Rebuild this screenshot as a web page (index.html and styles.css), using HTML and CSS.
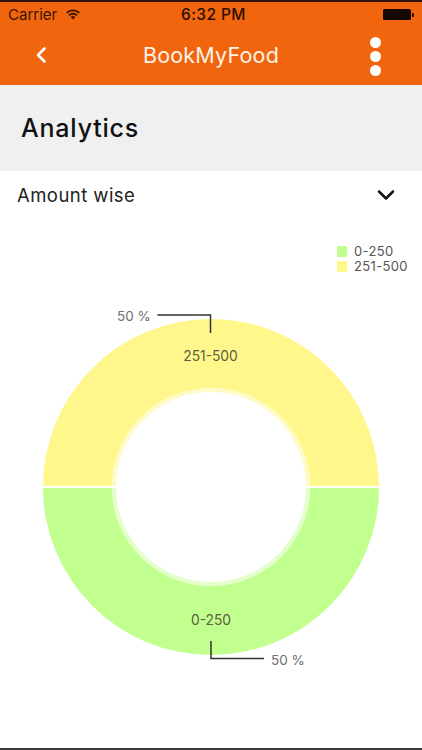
FILE: index.html
```html
<!DOCTYPE html>
<html lang="en">
<head>
<meta charset="utf-8">
<title>BookMyFood</title>
<link rel="stylesheet" href="styles.css">
</head>
<body>
<div class="screen">
  <header class="appbar">
    <div class="status">
      <div class="status-left">
        <span>Carrier</span>
        <svg class="wifi" viewBox="0 0 16 12" width="16" height="12"><path d="M8 11.6 5.7 9.1a3.3 3.3 0 0 1 4.6 0ZM4.6 8 3.4 6.7a6.6 6.6 0 0 1 9.2 0L11.4 8a4.9 4.9 0 0 0-6.8 0ZM2.3 5.6 1 4.3a9.9 9.9 0 0 1 14 0l-1.3 1.3a8.1 8.1 0 0 0-11.4 0Z" fill="#3a1600"/></svg>
      </div>
      <span class="clock">6:32 PM</span>
      <div class="battery"><span class="battery-body"></span><span class="battery-tip"></span></div>
    </div>
    <nav class="navbar">
      <svg class="back" viewBox="0 0 12 18" width="12" height="18"><path d="M9.5 2.5 3 9l6.5 6.5" fill="none" stroke="#fff" stroke-width="2.6" stroke-linecap="round" stroke-linejoin="round"/></svg>
      <h1 class="title">BookMyFood</h1>
      <div class="dots"><span></span><span></span><span></span></div>
    </nav>
  </header>
  <section class="heading"><h2>Analytics</h2></section>
  <div class="select">
    <span>Amount wise</span>
    <svg viewBox="0 0 18 12" width="18" height="12"><path d="M2 2.5 9 9.5l7-7" fill="none" stroke="#111" stroke-width="2.5" stroke-linecap="round" stroke-linejoin="round"/></svg>
  </div>
  <div class="legend">
    <div class="legend-item"><i class="swatch green"></i>0-250</div>
    <div class="legend-item"><i class="swatch yellow"></i>251-500</div>
  </div>
  <svg class="chart" viewBox="0 0 422 440" width="422" height="440">
    <g transform="translate(211 223)">
      <path d="M-168 0A168 168 0 0 1 168 0H99A99 99 0 0 0-99 0Z" fill="#fff68c"/>
      <path d="M-168 0A168 168 0 0 0 168 0H99A99 99 0 0 1-99 0Z" fill="#c1ff8e"/>
      <path d="M-99 0A99 99 0 0 1 99 0H95A95 95 0 0 0-95 0Z" fill="#fffbc8"/>
      <path d="M-99 0A99 99 0 0 0 99 0H95A95 95 0 0 1-95 0Z" fill="#e4ffcc"/>
      <path d="M-168 0H-95M95 0H168" stroke="#fff" stroke-width="2"/>
    </g>
    <path class="leader" d="M157.500 51H210.500V69"/>
    <path class="leader" d="M211 377V394.500H264"/>
    <text class="pct" x="117" y="57">50 %</text>
    <text class="pct" x="271" y="401">50 %</text>
    <text class="lbl" x="210.500" y="97">251-500</text>
    <text class="lbl" x="211" y="361">0-250</text>
  </svg>
</div>
</body>
</html>
```
FILE: styles.css
```css
* { box-sizing: border-box; margin: 0; padding: 0; }
html, body { width: 422px; height: 750px; overflow: hidden; background: #fff; }
body { font-family: Inter, "Liberation Sans", sans-serif; }
.screen {
  position: relative;
  width: 422px;
  height: 750px;
  border-top: 2px solid #2a1408;
  border-bottom: 2px solid #3a3a3a;
  overflow: hidden;
}
.appbar { height: 83px; background: #f0650e; display: flex; flex-direction: column; }
.status {
  height: 25px;
  padding: 0 8px;
  display: flex;
  align-items: center;
  justify-content: space-between;
  color: #3a1600;
  font-size: 15px;
}
.status-left { width: 96px; display: flex; align-items: center; gap: 8px; }
.wifi { margin-top: -2px; }
.clock { font-weight: 500; font-size: 15.500px; letter-spacing: 0.4px; color: #2a1000; margin-left: 5px; }
.battery { width: 96px; display: flex; justify-content: flex-end; align-items: center; gap: 1px; }
.battery-body { width: 28px; height: 11px; background: #140800; border-radius: 1.5px; }
.battery-tip { width: 2px; height: 4px; background: #2a1000; border-radius: 0 1px 1px 0; }
.navbar {
  position: relative;
  flex: 1;
  display: flex;
  align-items: center;
  justify-content: center;
  padding-bottom: 3px;
  color: #fff;
}
.back { position: absolute; left: 35px; top: 19px; }
.title { font-size: 21.500px; font-weight: 400; letter-spacing: 0.2px; color: #fff3e6; }
.dots {
  position: absolute;
  left: 370px;
  top: 10px;
  display: flex;
  flex-direction: column;
  gap: 3px;
}
.dots span { display: block; width: 11px; height: 11px; border-radius: 50%; background: #fff; }
.heading { height: 86px; background: #f0f0f0; display: flex; align-items: center; padding: 0 21px 1px; }
.heading h2 { font-size: 25px; font-weight: 500; color: #111; letter-spacing: 0.8px; }
.select {
  height: 48px;
  padding: 0 27px 0 17px;
  display: flex;
  align-items: center;
  justify-content: space-between;
  font-size: 18.500px;
  letter-spacing: 0.45px;
  color: #222;
}
.legend {
  position: absolute;
  left: 337px;
  top: 242px;
  font-size: 13px;
  line-height: 15px;
  letter-spacing: 0.35px;
  color: #555;
}
.legend-item { display: flex; align-items: center; gap: 7px; }
.swatch { display: block; width: 10px; height: 11px; }
.green { background: #c1ff8e; }
.yellow { background: #fff68c; }
.chart { position: absolute; left: 0; top: 262px; display: block; }
.leader { fill: none; stroke: #333; stroke-width: 1.500; }
.pct { font-size: 13.500px; fill: #6e6e6e; }
.lbl { font-size: 13.800px; fill: #5a6040; text-anchor: middle; }
```
